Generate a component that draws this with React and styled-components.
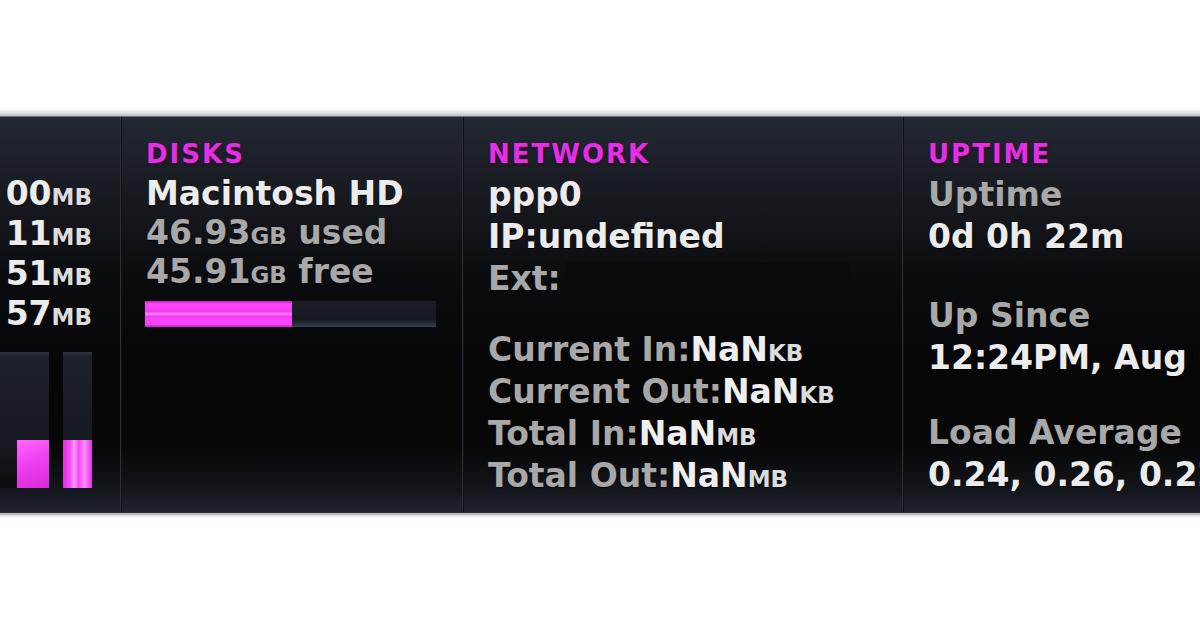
import styled, { createGlobalStyle } from "styled-components";

const Global = createGlobalStyle`
  body {
    margin: 0;
    background: #fff;
    font-family: "DejaVu Sans", "Liberation Sans", sans-serif;
  }
`;

const Page = styled.div`
  height: 628px;
  overflow: hidden;
  padding-top: 116px;
  box-sizing: border-box;
  background: #fff;
`;

const Panel = styled.div`
  display: flex;
  width: max-content;
  height: 395px;
  margin-left: -120px;
  border-top: 1px solid #6a707a;
  border-bottom: 1px solid #2a2e36;
  box-shadow: 0 -3px 5px rgba(60, 66, 76, 0.35), 0 2px 3px rgba(60, 66, 76, 0.45);
  background: linear-gradient(
    to bottom,
    #232833 0px,
    #1a1d24 60px,
    #0b0c0f 160px,
    #060607 250px,
    #070708 330px,
    #14171d 375px,
    #1f232b 395px
  );
`;

const Column = styled.div`
  flex: none;
  width: ${(p) => p.$w}px;
  box-sizing: border-box;
  padding: 20px 0 0 25px;
  line-height: ${(p) => p.$lh}px;
  white-space: nowrap;
  overflow: hidden;
  border-left: 1px solid #2d3139;
  box-shadow: inset 1px 0 0 #0d0f12;
`;

const MemColumn = styled.div`
  flex: none;
  width: 240px;
  box-sizing: border-box;
  padding: 57px 28px 0 0;
  line-height: 40px;
  text-align: right;
  white-space: nowrap;
`;

const Heading = styled.div`
  font-size: 26px;
  line-height: 34px;
  margin-bottom: 3px;
  font-weight: bold;
  letter-spacing: 2px;
  color: #e52ee5;
  text-shadow: 0 2px 2px #2a0a22;
`;

const Line = styled.div`
  font-size: 33px;
  font-weight: bold;
  color: ${(p) => (p.$dim ? "#a8a8a8" : "#ececec")};
  text-shadow: 0 1px 1px #000;
  margin-top: ${(p) => p.$gap || 0}px;
`;

const Val = styled.span`
  color: #efefef;
`;

const Unit = styled.span`
  font-size: 23px;
  line-height: 1;
  color: ${(p) => (p.$dim ? "#a8a8a8" : "#dcdcdc")};
`;

const Hidden = styled.span`
  display: inline-block;
  width: 285px;
  height: 36px;
  margin-left: 4px;
  vertical-align: -8px;
  background: #0a0b0d;
`;

const UsageTrack = styled.div`
  width: 291px;
  height: 26px;
  margin: 10px 0 0 -1px;
  display: flex;
  background: linear-gradient(to bottom, #1b1e25 0%, #15181e 70%, #39414f 100%);
`;

const UsageFill = styled.div`
  height: 100%;
  background: linear-gradient(
    to bottom,
    #c81ec8 0%,
    #ff46ff 12%,
    #f53cf5 42%,
    #ff90ff 50%,
    #f53cf5 58%,
    #ff46ff 88%,
    #c81ec8 100%
  );
`;

const Bars = styled.div`
  display: flex;
  justify-content: flex-end;
  gap: 14px;
  margin-top: 18px;
`;

const Meter = styled.div`
  width: ${(p) => p.$w}px;
  height: 136px;
  display: flex;
  flex-direction: column;
  justify-content: flex-end;
  align-items: flex-end;
  background: linear-gradient(to bottom, #2c313a 0px, #1d2129 6px, #161920 70%, #0c0d10 100%);
`;

const MeterFill = styled.div`
  width: ${(p) => p.$w}px;
  background: ${(p) =>
    p.$striped
      ? "linear-gradient(to right, #e02ee0 0%, #f550f5 25%, #ff9aff 38%, #f24cf2 55%, #ff8cff 75%, #e030e0 100%)"
      : "linear-gradient(160deg, #ff66ff 0%, #f040f0 45%, #d82ad8 100%)"};
`;

const mem = ["00", "11", "51", "57"];

const Mem = () => (
  <MemColumn>
    {mem.map((v) => (
      <Line key={v}>
        {v}
        <Unit>MB</Unit>
      </Line>
    ))}
    <Bars>
      <Meter $w={60}>
        <MeterFill $w={32} style={{ height: "48px" }} />
      </Meter>
      <Meter $w={29}>
        <MeterFill $w={29} $striped style={{ height: "48px" }} />
      </Meter>
    </Bars>
  </MemColumn>
);

const Disks = () => {
  const used = 46.93;
  const free = 45.91;
  const pct = (used / (used + free)) * 100;
  return (
    <Column $w={342} $lh={39}>
      <Heading>DISKS</Heading>
      <Line>Macintosh HD</Line>
      <Line $dim>
        46.93<Unit $dim>GB</Unit> used
      </Line>
      <Line $dim>
        45.91<Unit $dim>GB</Unit> free
      </Line>
      <UsageTrack>
        <UsageFill style={{ width: `${pct}%` }} />
      </UsageTrack>
    </Column>
  );
};

const Network = () => (
  <Column $w={440} $lh={42}>
    <Heading>NETWORK</Heading>
    <Line>ppp0</Line>
    <Line>IP:undefined</Line>
    <Line $dim>
      Ext:
      <Hidden />
    </Line>
    <Line $dim $gap={29}>
      Current In:<Val>NaN</Val>
      <Unit>KB</Unit>
    </Line>
    <Line $dim>
      Current Out:<Val>NaN</Val>
      <Unit>KB</Unit>
    </Line>
    <Line $dim>
      Total In:<Val>NaN</Val>
      <Unit>MB</Unit>
    </Line>
    <Line $dim>
      Total Out:<Val>NaN</Val>
      <Unit>MB</Unit>
    </Line>
  </Column>
);

const Uptime = () => (
  <Column $w={420} $lh={42}>
    <Heading>UPTIME</Heading>
    <Line $dim>Uptime</Line>
    <Line>0d 0h 22m</Line>
    <Line $dim $gap={37}>
      Up Since
    </Line>
    <Line>12:24PM, Aug 6, 2010</Line>
    <Line $dim $gap={33}>
      Load Average
    </Line>
    <Line>0.24, 0.26, 0.22</Line>
  </Column>
);

export default function App() {
  return (
    <Page>
      <Global />
      <Panel>
        <Mem />
        <Disks />
        <Network />
        <Uptime />
      </Panel>
    </Page>
  );
}
